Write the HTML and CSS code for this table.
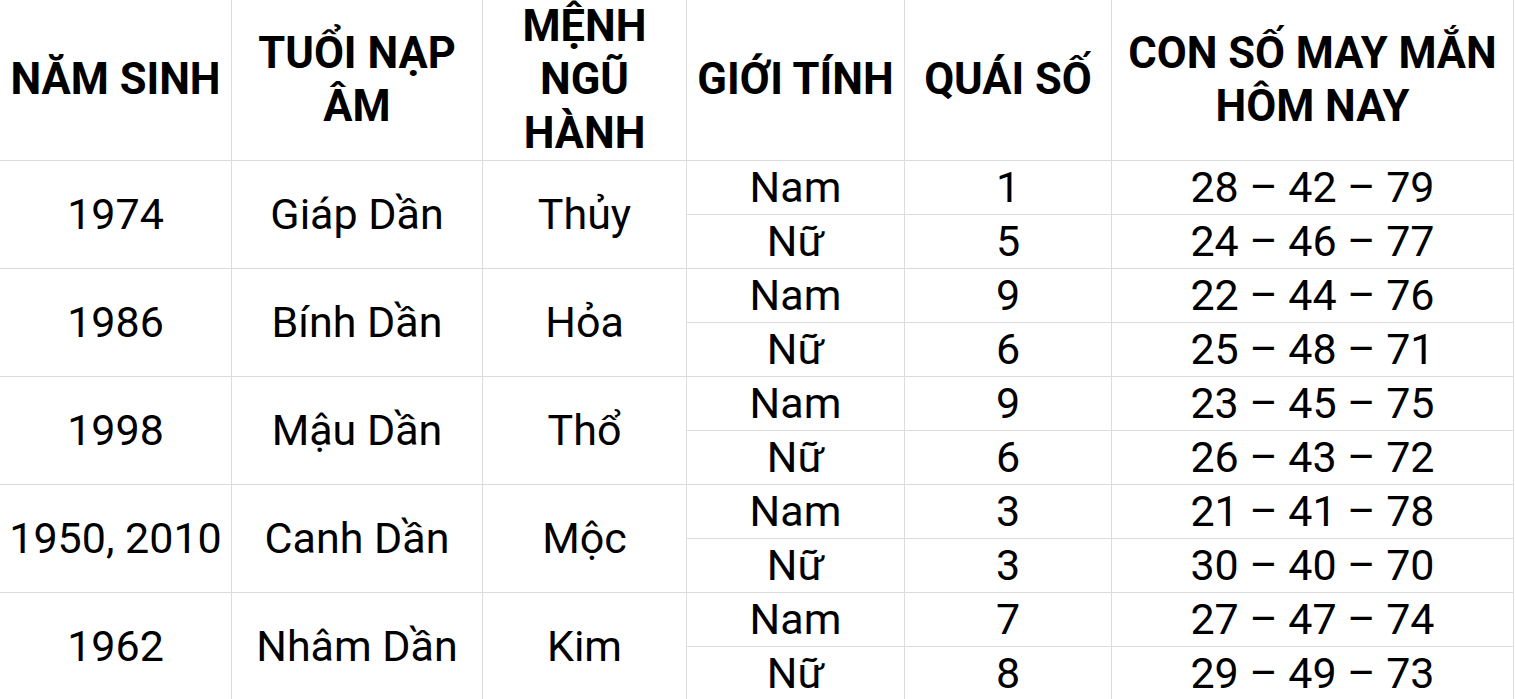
FILE: index.html
```html
<!DOCTYPE html>
<html lang="vi">
<head>
<meta charset="utf-8">
<title>Con số may mắn</title>
<link rel="stylesheet" href="styles.css">
</head>
<body>
<div class="table">
  <div class="cell head">NĂM SINH</div>
  <div class="cell head">TUỔI NẠP ÂM</div>
  <div class="cell head">MỆNH<br>NGŨ<br>HÀNH</div>
  <div class="cell head">GIỚI TÍNH</div>
  <div class="cell head">QUÁI SỐ</div>
  <div class="cell head">CON SỐ MAY MẮN<br>HÔM NAY</div>

  <div class="cell span">1974</div>
  <div class="cell span">Giáp Dần</div>
  <div class="cell span">Thủy</div>
  <div class="cell">Nam</div><div class="cell">1</div><div class="cell">28 – 42 – 79</div>
  <div class="cell">Nữ</div><div class="cell">5</div><div class="cell">24 – 46 – 77</div>

  <div class="cell span">1986</div>
  <div class="cell span">Bính Dần</div>
  <div class="cell span">Hỏa</div>
  <div class="cell">Nam</div><div class="cell">9</div><div class="cell">22 – 44 – 76</div>
  <div class="cell">Nữ</div><div class="cell">6</div><div class="cell">25 – 48 – 71</div>

  <div class="cell span">1998</div>
  <div class="cell span">Mậu Dần</div>
  <div class="cell span">Thổ</div>
  <div class="cell">Nam</div><div class="cell">9</div><div class="cell">23 – 45 – 75</div>
  <div class="cell">Nữ</div><div class="cell">6</div><div class="cell">26 – 43 – 72</div>

  <div class="cell span">1950, 2010</div>
  <div class="cell span">Canh Dần</div>
  <div class="cell span">Mộc</div>
  <div class="cell">Nam</div><div class="cell">3</div><div class="cell">21 – 41 – 78</div>
  <div class="cell">Nữ</div><div class="cell">3</div><div class="cell">30 – 40 – 70</div>

  <div class="cell span">1962</div>
  <div class="cell span">Nhâm Dần</div>
  <div class="cell span">Kim</div>
  <div class="cell">Nam</div><div class="cell">7</div><div class="cell">27 – 47 – 74</div>
  <div class="cell">Nữ</div><div class="cell">8</div><div class="cell">29 – 49 – 73</div>
</div>
</body>
</html>
```
FILE: styles.css
```css
html, body {
  margin: 0;
  padding: 0;
  background: #fff;
}
body {
  font-family: Roboto, "Noto Sans", sans-serif;
  color: #000;
  overflow: hidden;
}
.table {
  display: grid;
  width: 1513px;
  grid-template-columns: 231px 250px 203px 217px 206px 401px;
  grid-template-rows: 160px;
  grid-auto-rows: 53px;
  gap: 1px;
  padding-right: 1px;
  background: #dcdcdc;
  box-sizing: content-box;
}
.cell {
  background: #fff;
  display: flex;
  align-items: center;
  justify-content: center;
  text-align: center;
  font-size: 43px;
  line-height: 53.4px;
  white-space: nowrap;
}
.head {
  font-weight: 700;
  font-size: 43.5px;
  white-space: normal;
  line-height: 53.4px;
}
.span {
  grid-row: span 2;
}
```
